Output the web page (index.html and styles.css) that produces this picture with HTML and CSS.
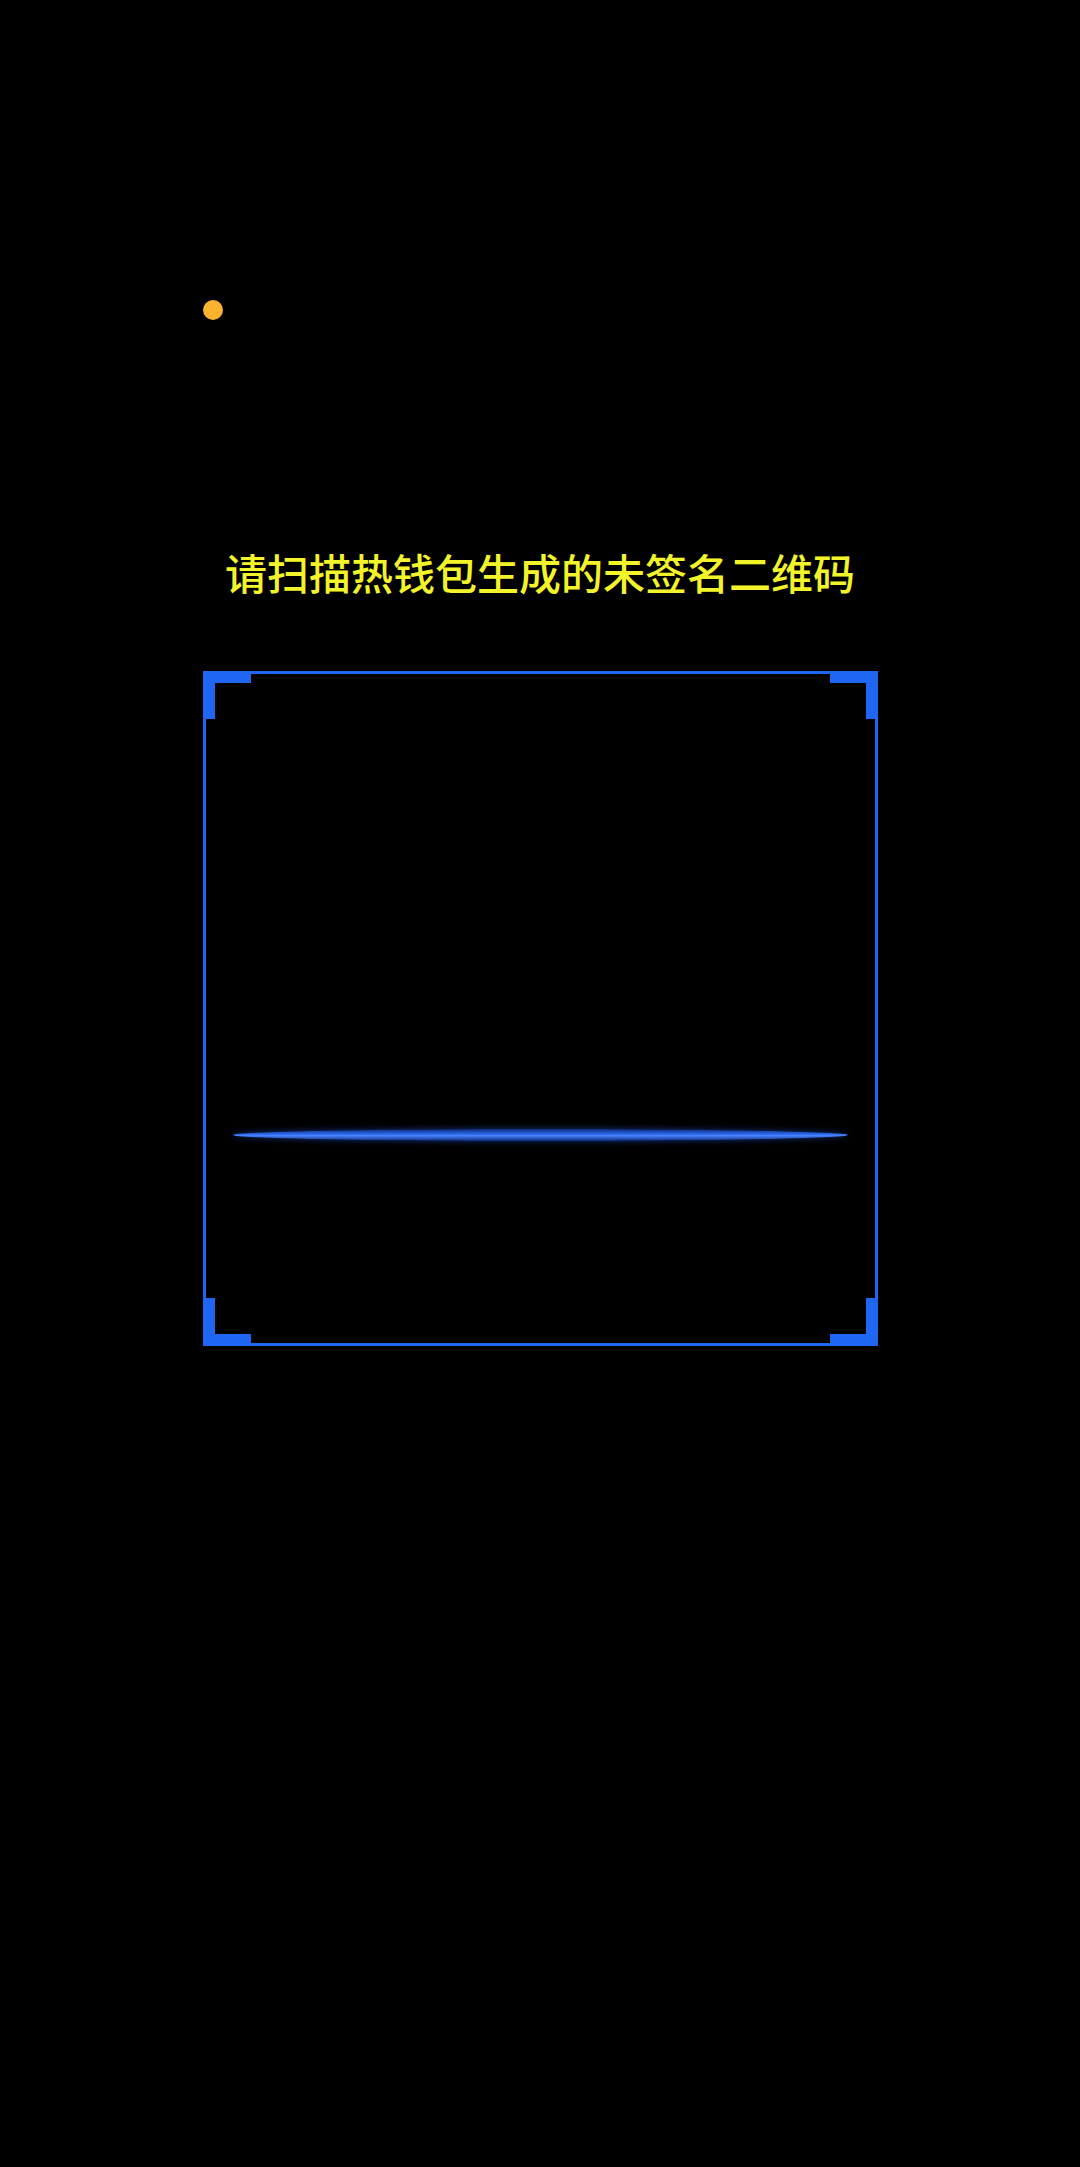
FILE: index.html
```html
<!DOCTYPE html>
<html lang="zh-CN">
<head>
  <meta charset="UTF-8" />
  <meta name="viewport" content="width=1080, initial-scale=1.0"/>
  <title>扫描二维码</title>
  <link rel="stylesheet" href="styles.css">
</head>
<body>

  <div class="page">
    <div class="dot"></div>

    <h1 class="title">请扫描热钱包生成的未签名二维码</h1>

    <div class="scan-frame">
      <!-- corners -->
      <span class="corner tl"></span>
      <span class="corner tr"></span>
      <span class="corner bl"></span>
      <span class="corner br"></span>

      <div class="scan-line"></div>
    </div>
  </div>

</body>
</html>
```

FILE: styles.css
```css
html, body {
  margin: 0;
  background: #000;
}

body {
  font-family: "Noto Sans CJK SC", "Noto Sans", sans-serif;
}

.page {
  width: 1080px;
  min-height: 2167px;
  padding-top: 300px;
  box-sizing: border-box;
}

.dot {
  width: 20px;
  height: 20px;
  margin-left: 203px;
  border-radius: 50%;
  background: #fbb22e;
}

.title {
  margin: 224px 0 0 0;
  font-size: 42px;
  line-height: 56px;
  font-weight: 500;
  text-align: center;
  color: #f3f32a;
}

.scan-frame {
  position: relative;
  width: 675px;
  height: 675px;
  margin: 71px auto 0 auto;
  border: 3px solid #1f66f2;
  box-sizing: border-box;
  display: flex;
  flex-direction: column;
  align-items: center;
}

.corner {
  position: absolute;
  width: 48px;
  height: 48px;
  box-sizing: border-box;
  border: 0 solid #1f66f2;
}

.corner.tl {
  top: -3px;
  left: -3px;
  border-top-width: 12px;
  border-left-width: 12px;
}

.corner.tr {
  top: -3px;
  right: -3px;
  border-top-width: 12px;
  border-right-width: 12px;
}

.corner.bl {
  bottom: -3px;
  left: -3px;
  border-bottom-width: 12px;
  border-left-width: 12px;
}

.corner.br {
  bottom: -3px;
  right: -3px;
  border-bottom-width: 12px;
  border-right-width: 12px;
}

.scan-line {
  width: 615px;
  height: 12px;
  margin-top: 455px;
  border-radius: 50%;
  background: linear-gradient(to bottom, #0b2a7a 0%, #2f6cf0 45%, #4a84ff 55%, #0b2a7a 100%);
  box-shadow: 0 0 6px rgba(40, 100, 255, 0.5);
}
```
